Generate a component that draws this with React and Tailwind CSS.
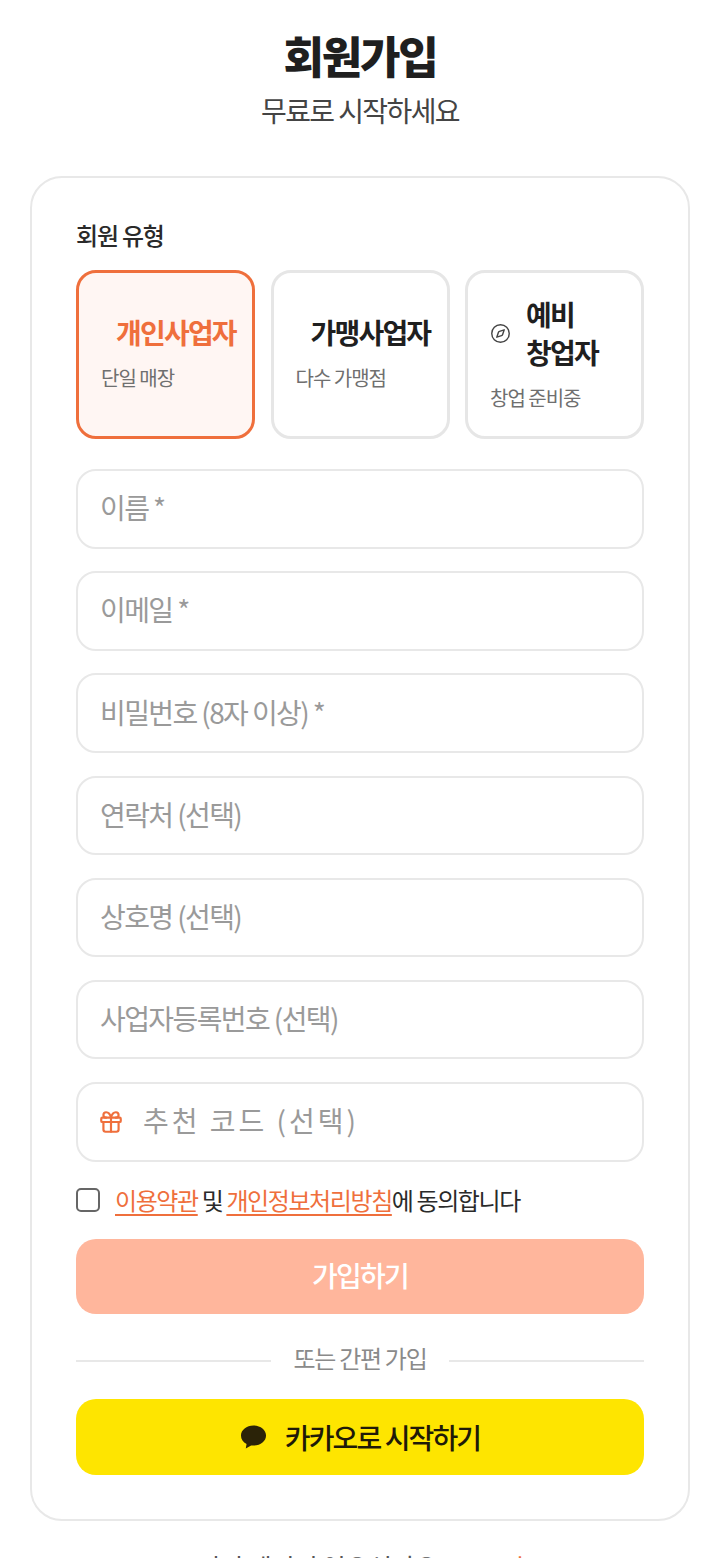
import React from "react";
import { Compass, Gift } from "lucide-react";

const font = { fontFamily: '"Noto Sans CJK KR", "Noto Sans", sans-serif' };

function Field({ children }) {
  return (
    <div className="h-[79.5px] rounded-[20px] border-2 border-[#e8e8e8] bg-white flex items-center px-[22px] pb-[3px] text-[28px] tracking-[-1.6px] text-[#9a9a9a]">
      {children}
    </div>
  );
}

function TypeCard({ active, icon, title, sub }) {
  return (
    <div className={`flex-1 min-w-0 h-[169px] rounded-[20px] border-[3.5px] flex flex-col justify-start px-[22px] ${active ? "border-[#ef6f3c] bg-[#fff6f3]" : "border-[#e6e6e6] bg-white"}`}>
      <div className={`flex items-center gap-[15px] ${icon ? "mt-[22px]" : "mt-[40px]"}`}>
        {icon}
        <span className={`text-[28px] font-bold leading-[38px] tracking-[-1.8px] whitespace-nowrap ${active ? "text-[#ef6f3c]" : "text-[#1f1f1f]"} ${icon ? "" : "ml-[15px]"}`}>{title}</span>
      </div>
      <div className="mt-[11.5px] text-[20px] leading-[30px] tracking-[-1px] text-[#6f6f6f]">{sub}</div>
    </div>
  );
}

export default function App() {
  return (
    <div style={font} className="h-[1558px] overflow-hidden bg-white px-[30px]">
      <div className="pt-[25px] text-center text-[44px] leading-[60px] font-extrabold tracking-[-2.2px] text-[#1f1f1f]">회원가입</div>
      <div className="mt-[7px] text-center text-[28px] leading-[36px] tracking-[-1.6px] text-[#444]">무료로 시작하세요</div>
      <div className="mt-[48px] rounded-[32px] border-2 border-[#e8e8e8] bg-white px-[44px] pt-[41px] h-[1345px]">
        <div className="text-[24px] leading-[32px] font-medium tracking-[-1.2px] text-[#2a2a2a]">회원 유형</div>
        <div className="mt-[19px] flex gap-[15.5px]">
          <TypeCard active title="개인사업자" sub="단일 매장" />
          <TypeCard title="가맹사업자" sub="다수 가맹점" />
          <TypeCard icon={<Compass size={21} strokeWidth={1.6} className="shrink-0 text-[#444]" />} title={<>예비<br />창업자</>} sub="창업 준비중" />
        </div>
        <div className="mt-[30px] flex flex-col gap-[22.7px]">
          <Field>이름 *</Field>
          <Field>이메일 *</Field>
          <Field>비밀번호 (8자 이상) *</Field>
          <Field>연락처 (선택)</Field>
          <Field>상호명 (선택)</Field>
          <Field>사업자등록번호 (선택)</Field>
          <Field>
            <Gift size={26} strokeWidth={2} className="shrink-0 text-[#ef6f3c] ml-[-2px] mr-[19px] mt-[3px]" />
            <span className="tracking-[3px]">추천 코드 (선택)</span>
          </Field>
        </div>
        <div className="mt-[22px] flex items-center gap-[15px] text-[24px] leading-[32px] tracking-[-1.4px] text-[#2a2a2a]">
          <span className="w-[24px] h-[24px] rounded-[5px] border-2 border-[#666] bg-white shrink-0" />
          <span>
            <span className="text-[#ef6f3c] underline underline-offset-4">이용약관</span> 및{" "}
            <span className="text-[#ef6f3c] underline underline-offset-4">개인정보처리방침</span>에 동의합니다
          </span>
        </div>
        <div className="mt-[23px] h-[75px] rounded-[20px] bg-[#ffb69c] flex items-center justify-center pb-[2px] text-[28px] font-medium tracking-[-1.7px] text-white">가입하기</div>
        <div className="mt-[30px] flex items-center gap-[23px]">
          <div className="flex-1 h-[2px] bg-[#e8e8e8] mt-[3px]" />
          <span className="-translate-y-[2px] text-[24px] leading-[32px] tracking-[-1.3px] text-[#8a8a8a]">또는 간편 가입</span>
          <div className="flex-1 h-[2px] bg-[#e8e8e8] mt-[3px]" />
        </div>
        <div className="mt-[23px] h-[76px] rounded-[20px] bg-[#fee500] flex items-center justify-center gap-[18px] text-[28px] font-medium tracking-[-1.9px] text-[#1f1a08]">
          <svg width="27" height="28" viewBox="0 0 28 28" className="shrink-0">
            <path fill="#2b2308" d="M14 2C6.800 2 1 6.500 1 12.500c0 3.800 2.300 7 5.800 8.800L6 26l5.500-3.300c.8.100 1.700.2 2.500.2 7.200 0 13-4.500 13-10.400S21.200 2 14 2z" />
          </svg>
          카카오로 시작하기
        </div>
      </div>
      <div className="mt-[30px] text-center text-[26px] leading-[32px] tracking-[-0.8px] text-[#555]">이미 계정이 있으신가요? <span className="text-[#ef6f3c]">로그인</span></div>
    </div>
  );
}
